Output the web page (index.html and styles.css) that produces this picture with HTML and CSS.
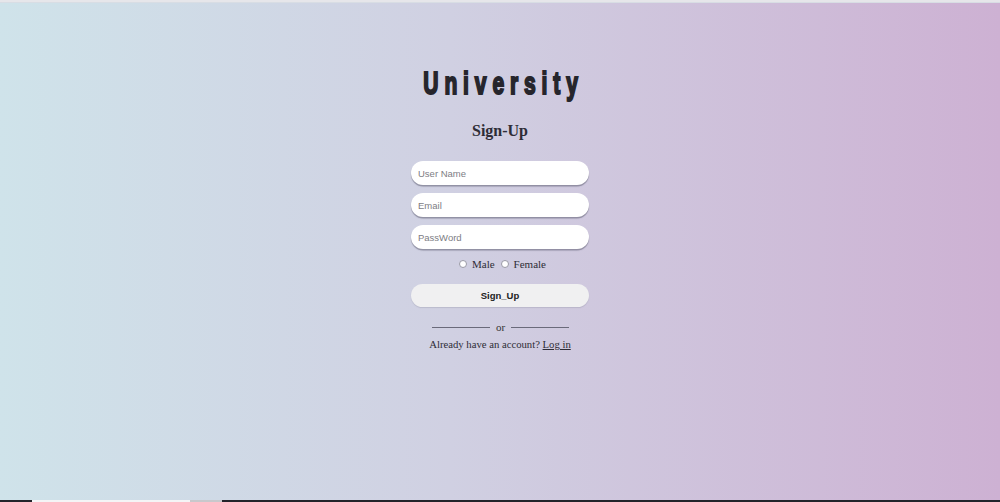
FILE: index.html
```html
<!DOCTYPE html>
<html>
<head>
<meta charset="utf-8">
<link rel="stylesheet" href="styles.css">
</head>
<body>
<div class="page">
  <div class="topline"></div>
  <main class="main">
    <form class="card">
      <h1 class="brand">University</h1>
      <h2 class="title">Sign-Up</h2>
      <input class="field" type="text" placeholder="User Name">
      <input class="field" type="email" placeholder="Email">
      <input class="field" type="password" placeholder="PassWord">
      <div class="gender">
        <label class="opt"><span class="radio"></span>Male</label>
        <label class="opt"><span class="radio"></span>Female</label>
      </div>
      <button class="btn" type="button">Sign_Up</button>
      <div class="or"><span class="line"></span><span>or</span><span class="line"></span></div>
      <p class="login">Already have an account? <a href="#">Log in</a></p>
    </form>
  </main>
  <div class="bottombar">
    <span class="seg-dark s1"></span>
    <span class="seg-white s2"></span>
    <span class="seg-gray s3"></span>
    <span class="seg-dark s4"></span>
  </div>
</div>
</body>
</html>
```
FILE: styles.css
```css
* { box-sizing: border-box; }
html, body { margin: 0; padding: 0; }
body {
  width: 1000px;
  height: 502px;
  overflow: hidden;
  font-family: "Liberation Serif", serif;
}
.page {
  height: 502px;
  display: flex;
  flex-direction: column;
  background: linear-gradient(to right, #cfe3ea 0%, #d0d0e2 45%, #cdb1d3 100%);
}
.topline {
  height: 3px;
  background: #e6e6ea;
  border-bottom: 1px solid #d8dde4;
}
.main {
  flex: 1;
  display: flex;
  justify-content: center;
}
.card {
  width: 178px;
  display: flex;
  flex-direction: column;
  align-items: center;
  margin-top: 63px;
}
.brand {
  margin: 0;
  font-family: "Liberation Sans", sans-serif;
  font-weight: bold;
  font-size: 31px;
  letter-spacing: 8.6px;
  color: #26252c;
  line-height: 36px;
  padding-left: 9px;
  white-space: nowrap;
  -webkit-text-stroke: 2px #26252c;
  transform: scaleX(0.68);
}
.title {
  margin: 19px 0 20px;
  font-size: 16px;
  font-weight: bold;
  color: #2e2d36;
  line-height: 20px;
}
.field {
  width: 178px;
  height: 24px;
  border: none;
  border-radius: 12px;
  background: #ffffff;
  box-shadow: 0 1.5px 1px rgba(90, 90, 110, 0.55);
  padding: 0 7px;
  font-family: "Liberation Sans", sans-serif;
  font-size: 9.5px;
  margin-bottom: 8px;
  outline: none;
}
.field::placeholder { color: #7d7d84; }
.gender {
  display: flex;
  gap: 6px;
  margin-top: 0;
  padding-left: 5px;
  font-size: 11px;
  color: #2e2d36;
  line-height: 14px;
}
.opt {
  display: flex;
  align-items: center;
  gap: 5px;
}
.radio {
  width: 8px;
  height: 8px;
  border-radius: 50%;
  background: #fff;
  border: 1px solid #9a9aa6;
}
.btn {
  margin-top: 13px;
  width: 178px;
  height: 23px;
  border: none;
  border-radius: 12px;
  background: #f0f0f1;
  font-family: "Liberation Sans", sans-serif;
  font-weight: bold;
  font-size: 9.5px;
  color: #222;
  box-shadow: 0 1px 1px rgba(120, 120, 140, 0.25);
}
.or {
  margin-top: 14px;
  display: flex;
  align-items: center;
  gap: 6px;
  padding-left: 1px;
  font-size: 11px;
  color: #333;
  line-height: 12px;
}
.line {
  width: 58px;
  height: 1px;
  background: #6a6a7a;
}
.login {
  margin: 4px 0 0;
  font-size: 10.7px;
  color: #2e2d36;
  line-height: 14px;
  white-space: nowrap;
}
.login a { color: #2e2d36; }
.bottombar {
  height: 2px;
  display: flex;
}
.bottombar span { height: 2px; display: block; }
.seg-dark { background: #23232a; }
.seg-white { background: #f4f4f6; }
.seg-gray { background: #c8c8cc; }
.s1 { width: 32px; }
.s2 { width: 158px; }
.s3 { width: 32px; }
.s4 { flex: 1; }
```
